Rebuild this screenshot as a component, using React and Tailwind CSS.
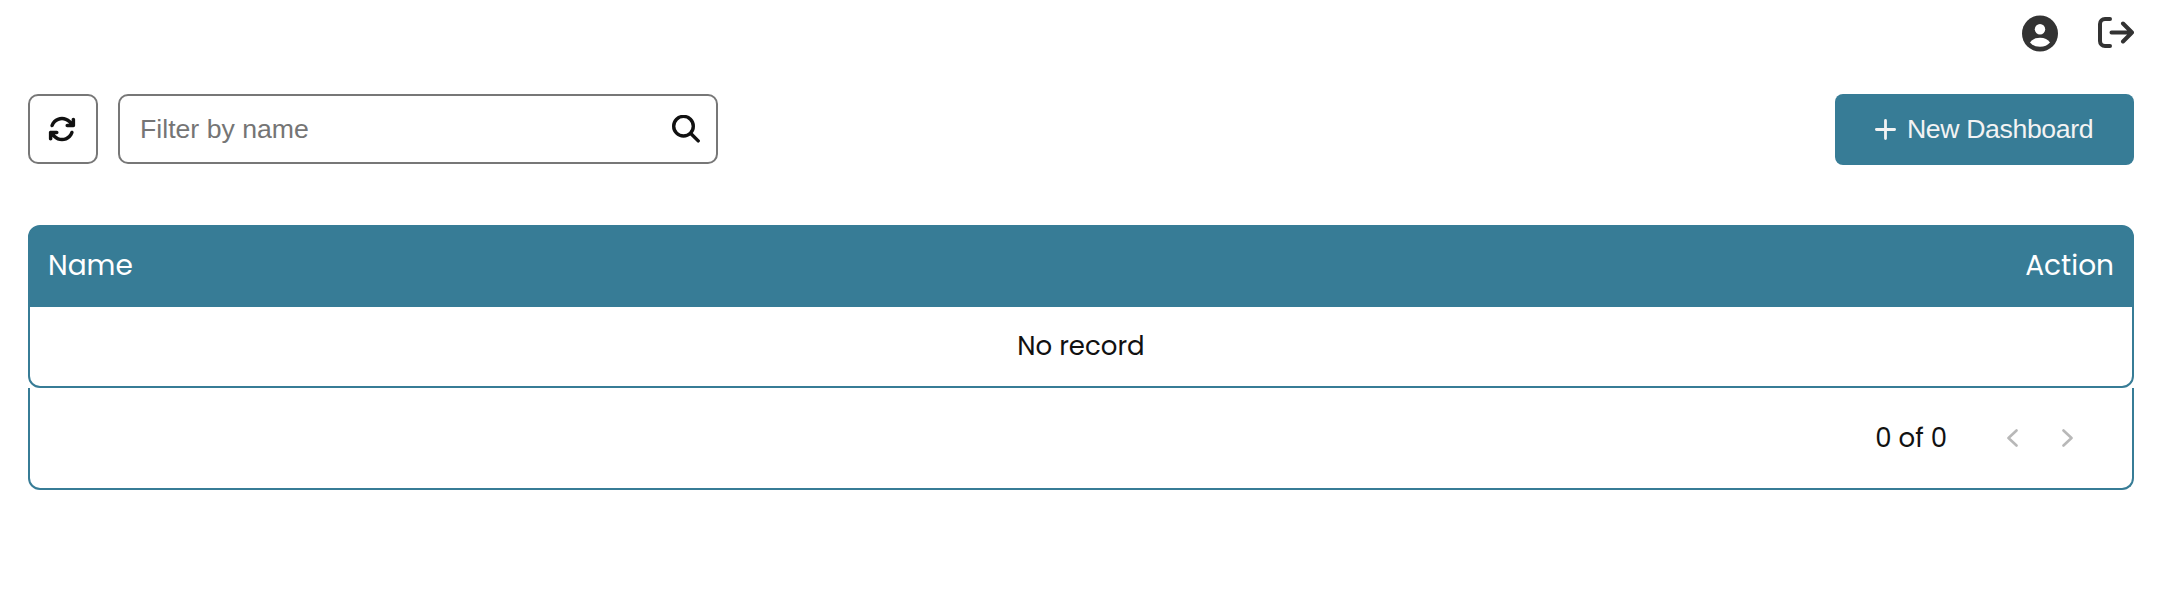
import { FaArrowsRotate } from "react-icons/fa6";

function AccountIcon() {
  return (
    <svg width="36" height="37" viewBox="0 0 36 37" fill="none">
      <circle cx="18" cy="18.5" r="18" fill="#333" />
      <circle cx="18" cy="14.3" r="5.2" fill="#fff" />
      <path d="M8 27.6Q11 22.8 18 22.8T28 27.6Q24.500 31.800 18 31.800T8 27.600Z" fill="#fff" />
    </svg>
  );
}

function SearchIcon() {
  return (
    <svg width="28" height="28" viewBox="0 0 28 28" fill="none" stroke="#111" strokeWidth="3.4" strokeLinecap="round">
      <circle cx="11.5" cy="11.2" r="9.8" />
      <path d="M18.800 18.500l7.4 7.4" />
    </svg>
  );
}

function LogoutIcon() {
  return (
    <svg width="36" height="32" viewBox="0 0 36 32" fill="none" stroke="#333" strokeWidth="4" strokeLinecap="round" strokeLinejoin="round">
      <path d="M12 2H7a5 5 0 0 0-5 5v17a5 5 0 0 0 5 5h5" />
      <path d="M13.5 15.5H34M25 6.500l9 9-9 9" />
    </svg>
  );
}

export default function App() {
  return (
    <main className="flex h-[610px] w-[2164px] flex-col bg-white pr-[30px] pl-7 font-['Poppins','Inter',sans-serif] text-[#111]">
      <header className="flex h-[94px] items-start justify-end">
        <button className="mt-[15px] mr-10" aria-label="Account">
          <AccountIcon />
        </button>
        <button className="mt-[17px]" aria-label="Log out">
          <LogoutIcon />
        </button>
      </header>

      <div className="flex h-[71px] items-start font-['Liberation_Sans',sans-serif]">
        <button className="flex h-[70px] w-[70px] items-center justify-center rounded-[10px] border-2 border-[#777] pr-[2px] pb-px" aria-label="Refresh">
          <FaArrowsRotate size={28} color="#111" />
        </button>
        <label className="ml-5 flex h-[70px] w-[600px] items-center justify-between rounded-[10px] border-2 border-[#777] pr-4 pl-5">
          <span className="text-[26.67px] leading-8 text-[#757575]">Filter by name</span>
          <SearchIcon />
        </label>
        <button className="ml-auto flex h-[71px] w-[299px] items-center rounded-lg bg-[#377c96] pb-px pl-10 text-[26.67px] leading-8 tracking-[-0.38px] whitespace-nowrap text-[#f3f3f3]">
          <svg className="mr-[11px] shrink-0" width="21" height="21" viewBox="0 0 21 21" fill="none" stroke="currentColor" strokeWidth="2.8" strokeLinecap="round">
            <path d="M10.5 1.4v18.2M1.4 10.5h18.2" />
          </svg>
          New Dashboard
        </button>
      </div>

      <section className="mt-[60px]">
        <div className="rounded-xl border-2 border-[#377c96] bg-[#377c96]">
          <div className="flex h-20 items-center justify-between px-[18px] pb-[2px] text-[28px] text-white">
            <span>Name</span>
            <span>Action</span>
          </div>
          <div className="flex h-[79px] items-center justify-center rounded-b-[10px] bg-white text-[26px]">No record</div>
        </div>
        <footer className="flex h-[102px] items-center justify-end rounded-b-xl border-2 border-t-0 border-[#377c96] pr-[59px]">
          <span className="mr-[60px] text-[26px]">0 of 0</span>
          <svg width="66" height="20" viewBox="0 0 66 20" fill="none" stroke="#b8b8b8" strokeWidth="2.6" strokeLinecap="round" strokeLinejoin="round">
            <path d="M9.5 2.500L1.500 10l8 7.5" />
            <path d="M56.500 2.500l8 7.500-8 7.500" />
          </svg>
        </footer>
      </section>
    </main>
  );
}
